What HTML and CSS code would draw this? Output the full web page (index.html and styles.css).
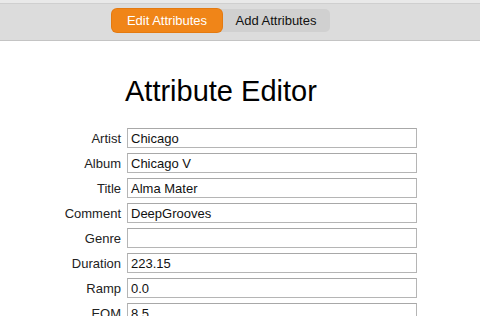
FILE: index.html
```html
<!DOCTYPE html>
<html lang="en">
<head>
    <meta charset="UTF-8">
    <title>Attribute Editor</title>
    <link rel="stylesheet" href="styles.css">
</head>
<body>
    <!-- Toolbar -->
    <div class="toolbar">
        <div class="segmented">
            <button type="button" class="seg active">Edit Attributes</button>
            <button type="button" class="seg">Add Attributes</button>
        </div>
    </div>

    <div class="editor">
        <h1>Attribute Editor</h1>
        <div class="form">
            <label>Artist</label><input type="text" value="Chicago">
            <label>Album</label><input type="text" value="Chicago V">
            <label>Title</label><input type="text" value="Alma Mater">
            <label>Comment</label><input type="text" value="DeepGrooves">
            <label>Genre</label><input type="text" value="">
            <label>Duration</label><input type="text" value="223.15">
            <label>Ramp</label><input type="text" value="0.0">
            <label>EQM</label><input type="text" value="8.5">
        </div>
    </div>
</body>
</html>
```

FILE: styles.css
```css
body {
    margin: 0;
    padding: 0;
    background: #fff;
    font-family: "Liberation Sans", Arial, sans-serif;
    color: #1a1a1a;
    overflow: hidden;
}
.toolbar {
    height: 38px;
    margin-top: 3px;
    padding-top: 5px;
    box-sizing: border-box;
    background: #dcdcdc;
    border-top: 1px solid #cfcfcf;
    border-bottom: 1px solid #c4c4c4;
    box-shadow: 0 -3px 0 #e9e9e9;
}
.segmented {
    display: flex;
    width: 218px;
    margin-left: 112px;
    background: #d0d0d0;
    border-radius: 5px;
}
.seg {
    height: 23px;
    padding: 0;
    border: none;
    border-radius: 5px;
    background: transparent;
    font-family: "Liberation Sans", Arial, sans-serif;
    font-size: 13px;
    color: #111;
    cursor: pointer;
}
.seg:first-child {
    width: 110px;
}
.seg:last-child {
    width: 108px;
}
.seg.active {
    background: #f08518;
    color: #fff;
    box-shadow: 0 0 0 1px #e47a10;
}
.editor {
    padding-top: 34px;
}
h1 {
    margin: 0 0 21px 125px;
    font-size: 29px;
    font-weight: normal;
    line-height: 32px;
    color: #000;
}
.form {
    display: grid;
    grid-template-columns: 121px 290px;
    column-gap: 6px;
    row-gap: 5px;
    align-items: center;
}
.form label {
    text-align: right;
    font-size: 13px;
    color: #222;
}
.form input {
    height: 20px;
    box-sizing: border-box;
    margin: 0;
    padding: 1px 3px 0;
    border: 1px solid #b5b5b5;
    border-top-color: #a8a8a8;
    border-radius: 0;
    font-family: "Liberation Sans", Arial, sans-serif;
    font-size: 13px;
    color: #111;
    background: #fff;
    outline: none;
}
```
